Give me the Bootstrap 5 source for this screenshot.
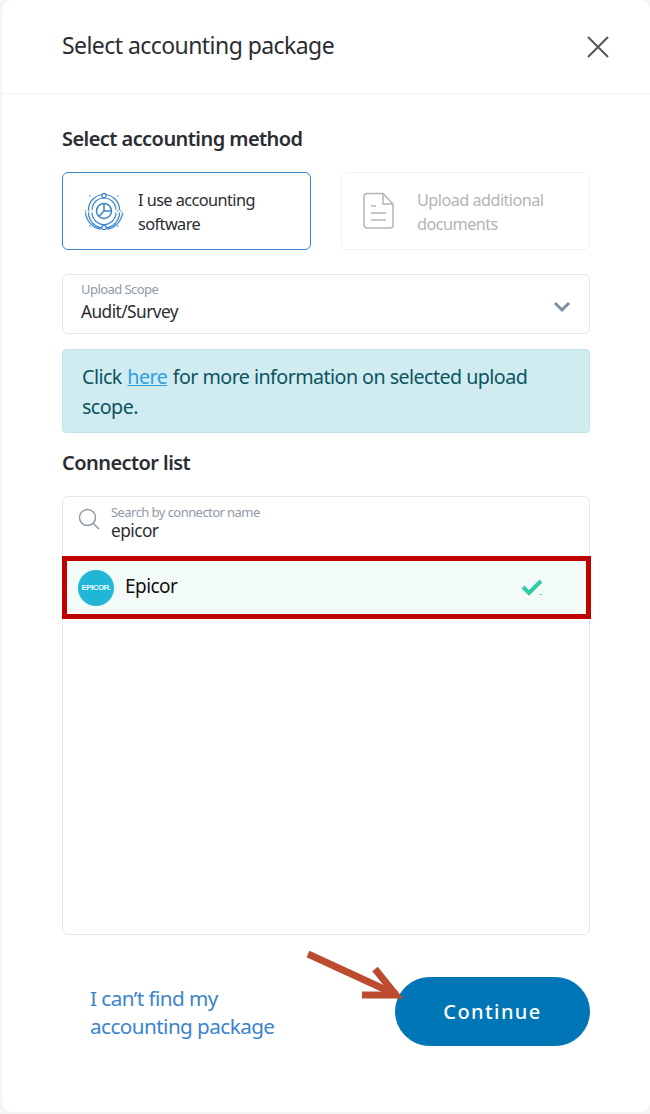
<!DOCTYPE html>
<html lang="en">
<head>
  <meta charset="UTF-8">
  <meta name="viewport" content="width=device-width, initial-scale=1.0">
  <title>Select accounting package</title>
  <link rel="stylesheet" href="https://cdn.jsdelivr.net/npm/bootstrap@5.3.3/dist/css/bootstrap.min.css">
  <style>
    body {
      background-color: #f5f5f5;
      font-family: "Noto Sans", sans-serif;
      color: #2b2d33;
      letter-spacing: -0.035em;
    }
    .pkg-modal {
      width: 648px;
      margin-left: 2px;
      height: 1112px;
      background-color: #fff;
      border: 0;
      border-radius: 10px;
      position: relative;
    }
    .pkg-head {
      height: 94px;
      padding: 0 40px 0 60px;
      border-bottom: 1px solid #f0f2f4;
    }
    .pkg-head h1 {
      font-size: 23px;
      font-weight: 400;
      margin: 0 0 2px;
    }
    .pkg-body {
      padding: 33px 60px 0;
    }
    .pkg-label {
      font-size: 20px;
      font-weight: 600;
      line-height: 24px;
      margin: 0;
    }
    .method-row {
      display: grid;
      grid-template-columns: 249px 249px;
      column-gap: 30px;
      margin-top: 21px;
    }
    .method-tile {
      height: 78px;
      border: 1px solid #f0f2f4;
      border-radius: 6px;
      padding-left: 21px;
      gap: 14px;
      font-size: 16.3px;
      line-height: 24px;
      color: #b4b4b4;
    }
    .method-tile span {
      margin-top: 2px;
    }
    .method-tile.is-active {
      border-color: #3a84cc;
      color: #2b2d33;
    }
    .doc-title {
      margin-left: 8px;
    }
    .scope-box {
      height: 60px;
      margin-top: 24px;
      padding: 6px 18px 0;
      border: 1px solid #e2e8ef;
      border-radius: 6px;
    }
    .scope-box .float-value {
      margin-top: 3px;
    }
    .float-label {
      font-size: 13px;
      line-height: 16px;
      color: #8f9aa8;
    }
    .float-value {
      font-size: 17.3px;
      line-height: 24px;
    }
    .scope-alert {
      height: 84px;
      margin: 15px 0 0;
      padding: 12px 19px 0;
      font-size: 19.7px;
      line-height: 30px;
      color: #0c5460;
      background-color: #d1ecf1;
      border: 1px solid #bee5eb;
      border-radius: 4px;
    }
    .scope-alert a {
      margin: 0 1px;
      color: #2f9fe0;
    }
    .connector-label {
      margin-top: 18px;
    }
    .connector-box {
      height: 439px;
      margin-top: 21px;
      border: 1px solid #e2e8ef;
      border-radius: 6px;
    }
    .connector-search {
      height: 59px;
      padding: 7px 0 0 15px;
      gap: 11px;
    }
    .connector-search .float-value {
      line-height: 22px;
    }
    .connector-hit {
      width: 529px;
      height: 63px;
      margin-left: -1px;
      padding: 0 0 2px 11px;
      gap: 11px;
      background-color: #f3fbf9;
      border: 5px solid #c00000;
      font-size: 19px;
      color: #111;
    }
    .epicor-logo {
      width: 36px;
      height: 36px;
      margin-top: 2px;
      background-color: #1fb6d8;
      font-family: "Liberation Sans", sans-serif;
      font-size: 8px;
      font-weight: 700;
      color: #e9f8fc;
    }
    .hit-check {
      margin-left: auto;
      margin-right: 43px;
    }
    .pkg-foot {
      margin-top: 42px;
      padding-left: 28px;
    }
    .cant-find {
      font-size: 20.7px;
      line-height: 28px;
      color: #3a84cc;
      text-decoration: none;
    }
    .btn-continue {
      width: 195px;
      height: 69px;
      border-radius: 35px;
      background-color: #0076b6;
      border-color: #0076b6;
      font-size: 20px;
      font-weight: 500;
      letter-spacing: 0.07em;
    }
    .note-arrow {
      position: absolute;
      left: 298px;
      top: 945px;
    }
  </style>
</head>
<body>

<div class="modal-content pkg-modal">
  <div class="pkg-head d-flex align-items-center justify-content-between">
    <h1>Select accounting package</h1>
    <svg width="24" height="24" viewBox="0 0 24 24" fill="none" stroke="#555" stroke-width="2"><path d="M2 2 L22 22 M22 2 L2 22"/></svg>
  </div>

  <div class="pkg-body">
    <p class="pkg-label">Select accounting method</p>

    <div class="method-row">
      <div class="method-tile is-active d-flex align-items-center">
        <svg width="40" height="40" viewBox="0 0 40 40" fill="none" stroke="#3a84cc" stroke-width="1.2" class="flex-shrink-0">
          <path d="M4.5 19 A15.5 15.5 0 0 1 35.5 19"/>
          <path d="M8 19 A12 12 0 0 1 32 19"/>
          <path d="M1.5 21.5 A18.5 18.5 0 0 0 17 38.2"/>
          <path d="M23 38.2 A18.5 18.5 0 0 0 38.5 21.5"/>
          <path d="M4.5 21.5 A15.5 15.5 0 0 0 35.5 21.5"/>
          <path d="M8 21.5 A12 12 0 0 0 32 21.5"/>
          <circle cx="20" cy="20" r="7.5" stroke-width="1.5"/>
          <path d="M20 12.5 V20 H27.5 M20 20 L14.8 25.4" stroke-width="1.5"/>
          <circle cx="20" cy="4.5" r="2.2" fill="#fff"/>
          <circle cx="20" cy="36.5" r="2.2" fill="#fff"/>
          <path d="M1 20 H7 M33 20 H39 M5 5 h2 M33 5 h2 M5 35 h2 M33 35 h2" stroke-dasharray="1.5 1.5"/>
        </svg>
        <span>I use accounting<br>software</span>
      </div>
      <div class="method-tile d-flex align-items-center">
        <svg width="32" height="38" viewBox="0 0 32 38" fill="none" stroke="#b4b4b4" stroke-width="1.5" class="flex-shrink-0">
          <path d="M4 1.5 H20 L30 12 V33 a3 3 0 0 1 -3 3 H4 a3 3 0 0 1 -3 -3 V4.5 a3 3 0 0 1 3 -3 Z"/>
          <path d="M20 1.5 V12 H30"/>
          <path d="M8 14 H13 M8 21 H23 M8 28 H23"/>
        </svg>
        <span class="doc-title">Upload additional<br>documents</span>
      </div>
    </div>

    <div class="scope-box d-flex align-items-center justify-content-between">
      <div class="align-self-start">
        <div class="float-label">Upload Scope</div>
        <div class="float-value">Audit/Survey</div>
      </div>
      <svg width="18" height="12" viewBox="0 0 18 12" fill="none" stroke="#7d8ea3" stroke-width="3"><path d="M2 2 L9 9 L16 2"/></svg>
    </div>

    <div class="alert scope-alert" role="alert"><span>Click</span> <a href="#">here</a> <span>for more information on selected upload</span><br><span>scope.</span></div>

    <p class="pkg-label connector-label">Connector list</p>

    <div class="connector-box">
      <div class="connector-search d-flex align-items-start">
        <svg width="22" height="22" viewBox="0 0 22 22" fill="none" stroke="#8f9aa8" stroke-width="1.5" class="mt-1 flex-shrink-0"><circle cx="9.5" cy="9.5" r="8"/><path d="M15.5 15.5 L21 21"/></svg>
        <div>
          <div class="float-label">Search by connector name</div>
          <div class="float-value">epicor</div>
        </div>
      </div>
      <div class="connector-hit d-flex align-items-center">
        <div class="epicor-logo rounded-circle d-flex align-items-center justify-content-center flex-shrink-0">EPICOR.</div>
        <span>Epicor</span>
        <svg class="hit-check" width="22" height="18" viewBox="0 0 22 18" fill="none" stroke="#2fcaa6" stroke-width="4"><path d="M2 9 L8 15 L20 3"/><path d="M18.5 16.5 H20.5" stroke-width="1"/></svg>
      </div>
    </div>

    <div class="pkg-foot d-flex align-items-center justify-content-between">
      <a href="#" class="cant-find">I can’t find my<br>accounting package</a>
      <button type="button" class="btn btn-primary btn-continue">Continue</button>
    </div>
  </div>

  <svg class="note-arrow" width="110" height="60" viewBox="0 0 110 60" fill="none" stroke="#bd4b30" stroke-width="7">
    <path d="M8 9 L97 50"/>
    <path d="M75 24 L96 50 L62 50"/>
  </svg>
</div>

<script src="https://cdn.jsdelivr.net/npm/bootstrap@5.3.3/dist/js/bootstrap.bundle.min.js"></script>
</body>
</html>
